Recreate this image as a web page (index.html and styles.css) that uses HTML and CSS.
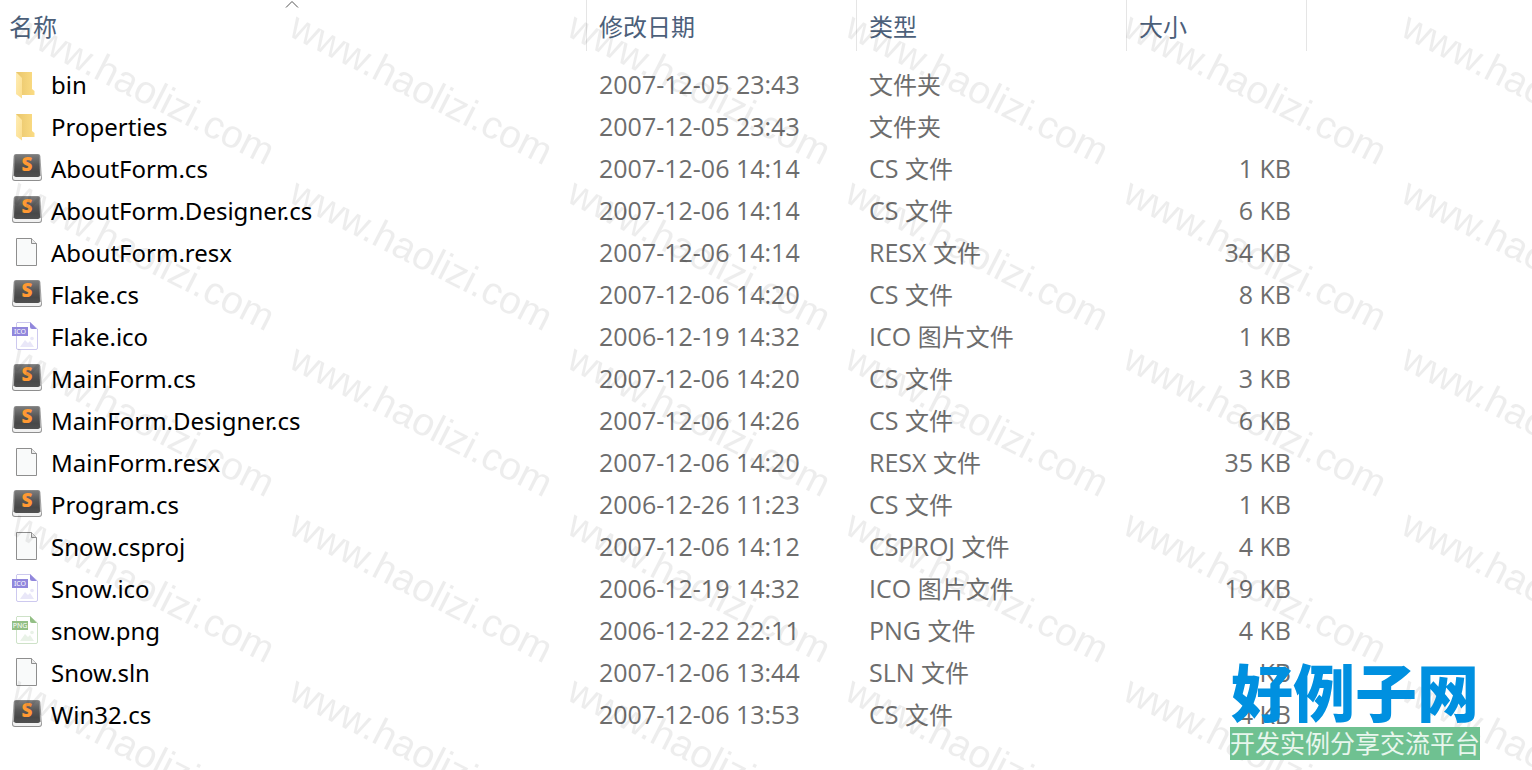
FILE: index.html
```html
<!DOCTYPE html>
<html lang="zh-CN">
<head>
    <meta charset="UTF-8">
    <meta name="viewport" content="width=device-width, initial-scale=1.0">
    <title>Snow</title>
    <link rel="stylesheet" href="styles.css">
</head>
<body>
    <!-- Icons shared by the rows -->
    <svg class="icon-defs" aria-hidden="true">
        <defs>
            <linearGradient id="key-face" x1="0" y1="0" x2="0" y2="1">
                <stop offset="0" stop-color="#7b7b7b"/>
                <stop offset="0.45" stop-color="#555"/>
                <stop offset="0.75" stop-color="#484848"/>
                <stop offset="1" stop-color="#505050"/>
            </linearGradient>
            <linearGradient id="key-side" x1="0" y1="0" x2="0" y2="1">
                <stop offset="0" stop-color="#888"/>
                <stop offset="0.7" stop-color="#b2b2b2"/>
                <stop offset="1" stop-color="#8c8c8c"/>
            </linearGradient>
            <linearGradient id="folder-front" x1="0" y1="0" x2="1" y2="1">
                <stop offset="0" stop-color="#ffedb5"/>
                <stop offset="1" stop-color="#fbdd8c"/>
            </linearGradient>
            <linearGradient id="folder-back" x1="0" y1="0" x2="1" y2="0">
                <stop offset="0" stop-color="#e9c66c"/>
                <stop offset="1" stop-color="#fbdc84"/>
            </linearGradient>
            <symbol id="icon-folder" viewBox="0 0 32 32">
                <path d="M5 3H21V20L23.500 22V26H10L5 25Z" fill="url(#folder-back)"/>
                <path d="M5 3L11 9V29.500L5 25Z" fill="url(#folder-front)"/>
            </symbol>
            <symbol id="icon-cs" viewBox="0 0 32 32">
                <path d="M5 1H27Q29 1 29.300 3L31 25Q31 28 28 28H4Q1 28 1 25L2.700 3Q3 1 5 1Z" fill="url(#key-side)"/>
                <path d="M2 23H30V25Q30 27 28 27H4Q2 27 2 25Z" fill="#f1f1f1"/>
                <path d="M5 2H27Q28 2 28.200 3L29 22Q29 24 27 24H5Q3 24 3 22L3.800 3Q4 2 5 2Z" fill="url(#key-face)"/>
                <text x="16" y="18" class="key-letter">S</text>
            </symbol>
            <symbol id="icon-file" viewBox="0 0 32 32">
                <path d="M5.500 1.500H20.500L25.500 6.500V28.500H5.500Z" fill="#f9fafa" stroke="#8e8e8e"/>
                <path d="M20.500 1.500V6.500H25.500" fill="#ececec" stroke="#8e8e8e"/>
            </symbol>
            <symbol id="icon-image" viewBox="0 0 32 32">
                <path d="M6 1.500H19L26.500 8V27Q26.500 28.500 25 28.500H7Q5.500 28.500 5.500 27V2Z" fill="#fff" stroke="currentColor" stroke-opacity="0.45"/>
                <path d="M19 1V6Q19 8 21 8H26Z" fill="currentColor"/>
                <path d="M9 26L14 19L17 22L19 20L23 26Z" fill="currentColor" fill-opacity="0.2"/>
                <circle cx="21" cy="17.500" r="1.800" fill="currentColor" fill-opacity="0.2"/>
                <path d="M1 6H17V15H1Z" fill="currentColor"/>
            </symbol>
        </defs>
    </svg>

    <main class="file-list">
        <table class="files">
            <colgroup>
                <col class="col-name">
                <col class="col-date">
                <col class="col-type">
                <col class="col-size">
                <col>
            </colgroup>
            <thead>
                <tr>
                    <th aria-sort="ascending">
                        <svg class="sort-arrow" viewBox="0 0 14 8" aria-hidden="true"><path d="M1 7.500L7 1.500L13 7.500"/></svg>
                        <button type="button">名称</button>
                    </th>
                    <th><button type="button">修改日期</button></th>
                    <th><button type="button">类型</button></th>
                    <th><button type="button">大小</button></th>
                    <th class="blank"></th>
                </tr>
            </thead>
            <tbody>
                <tr><td><div class="name"><svg><use href="#icon-folder"/></svg>bin</div></td><td>2007-12-05 23:43</td><td><span>文件夹</span></td><td></td></tr>
                <tr><td><div class="name"><svg><use href="#icon-folder"/></svg>Properties</div></td><td>2007-12-05 23:43</td><td><span>文件夹</span></td><td></td></tr>
                <tr><td><div class="name"><svg><use href="#icon-cs"/></svg>AboutForm.cs</div></td><td>2007-12-06 14:14</td><td>CS <span>文件</span></td><td>1 KB</td></tr>
                <tr><td><div class="name"><svg><use href="#icon-cs"/></svg>AboutForm.Designer.cs</div></td><td>2007-12-06 14:14</td><td>CS <span>文件</span></td><td>6 KB</td></tr>
                <tr><td><div class="name"><svg><use href="#icon-file"/></svg>AboutForm.resx</div></td><td>2007-12-06 14:14</td><td>RESX <span>文件</span></td><td>34 KB</td></tr>
                <tr><td><div class="name"><svg><use href="#icon-cs"/></svg>Flake.cs</div></td><td>2007-12-06 14:20</td><td>CS <span>文件</span></td><td>8 KB</td></tr>
                <tr><td><div class="name"><svg class="ico"><use href="#icon-image"/><text x="9" y="13">ICO</text></svg>Flake.ico</div></td><td>2006-12-19 14:32</td><td>ICO <span>图片文件</span></td><td>1 KB</td></tr>
                <tr><td><div class="name"><svg><use href="#icon-cs"/></svg>MainForm.cs</div></td><td>2007-12-06 14:20</td><td>CS <span>文件</span></td><td>3 KB</td></tr>
                <tr><td><div class="name"><svg><use href="#icon-cs"/></svg>MainForm.Designer.cs</div></td><td>2007-12-06 14:26</td><td>CS <span>文件</span></td><td>6 KB</td></tr>
                <tr><td><div class="name"><svg><use href="#icon-file"/></svg>MainForm.resx</div></td><td>2007-12-06 14:20</td><td>RESX <span>文件</span></td><td>35 KB</td></tr>
                <tr><td><div class="name"><svg><use href="#icon-cs"/></svg>Program.cs</div></td><td>2006-12-26 11:23</td><td>CS <span>文件</span></td><td>1 KB</td></tr>
                <tr><td><div class="name"><svg><use href="#icon-file"/></svg>Snow.csproj</div></td><td>2007-12-06 14:12</td><td>CSPROJ <span>文件</span></td><td>4 KB</td></tr>
                <tr><td><div class="name"><svg class="ico"><use href="#icon-image"/><text x="9" y="13">ICO</text></svg>Snow.ico</div></td><td>2006-12-19 14:32</td><td>ICO <span>图片文件</span></td><td>19 KB</td></tr>
                <tr><td><div class="name"><svg class="png"><use href="#icon-image"/><text x="9" y="13">PNG</text></svg>snow.png</div></td><td>2006-12-22 22:11</td><td>PNG <span>文件</span></td><td>4 KB</td></tr>
                <tr><td><div class="name"><svg><use href="#icon-file"/></svg>Snow.sln</div></td><td>2007-12-06 13:44</td><td>SLN <span>文件</span></td><td>1 KB</td></tr>
                <tr><td><div class="name"><svg><use href="#icon-cs"/></svg>Win32.cs</div></td><td>2007-12-06 13:53</td><td>CS <span>文件</span></td><td>4 KB</td></tr>
            </tbody>
        </table>
    </main>

    <!-- Repeating site watermark -->
    <svg class="watermark" aria-hidden="true">
        <defs>
            <pattern id="mark" width="278" height="166" patternUnits="userSpaceOnUse">
                <text transform="translate(9 35) rotate(27)">www.haolizi.com</text>
            </pattern>
        </defs>
        <rect width="100%" height="100%" fill="url(#mark)"/>
    </svg>

    <!-- Site stamp -->
    <div class="stamp">
        <div class="stamp-title">好例子网</div>
        <div class="stamp-text">开发实例分享交流平台</div>
    </div>
</body>
</html>
```
FILE: styles.css
```css
* {
    box-sizing: border-box;
}

body {
    margin: 0;
    min-height: 100vh;
    position: relative;
    overflow: hidden;
    background-color: #fff;
    font-family: "Open Sans", "Noto Sans CJK SC", sans-serif;
    font-size: 25px;
    color: #6d6d6d;
}

.icon-defs {
    position: absolute;
    width: 0;
    height: 0;
}

.files {
    width: 100%;
    table-layout: fixed;
    border-collapse: separate;
    border-spacing: 0;
}

.col-name {
    width: 587px;
}

.col-date, .col-type {
    width: 270px;
}

.col-size {
    width: 180px;
}

/* Header */
th {
    height: 51px;
    padding: 0;
    position: relative;
    border-right: 1px solid #e5e5e5;
    text-align: left;
}

th.blank {
    border-right: none;
}

th button {
    width: 100%;
    padding: 0 12px;
    border: none;
    background: none;
    font-family: "Noto Sans CJK SC", sans-serif;
    font-size: 24px;
    line-height: 50px;
    text-align: left;
    color: #4c607a;
}

th:first-child button {
    padding-left: 9px;
}

.sort-arrow {
    position: absolute;
    top: 0;
    left: 50%;
    width: 14px;
    height: 8px;
    margin-left: -8px;
    fill: none;
    stroke: #555;
}

/* Rows */
tbody::before {
    content: "";
    display: block;
    height: 13px;
}

td {
    height: 42px;
    padding: 0 12px 2px;
    line-height: 40px;
    white-space: nowrap;
}

td:first-child {
    padding-left: 11px;
    padding-bottom: 0;
    color: #000;
}

td:nth-child(4) {
    padding-right: 16px;
    text-align: right;
}

td span {
    font-size: 24px;
    line-height: 24px;
}

.name {
    display: flex;
    align-items: center;
    gap: 8px;
    height: 42px;
    font-family: "Noto Sans", sans-serif;
    font-size: 24px;
}

.name svg {
    width: 32px;
    height: 32px;
    flex: none;
}

.name text {
    fill: #fff;
    font-size: 7px;
    text-anchor: middle;
}

.key-letter {
    font-family: "Open Sans", sans-serif;
    font-size: 19px;
    font-weight: 800;
    fill: #ff9933;
    text-anchor: middle;
}

.name .ico {
    color: #9187dc;
}

.name .png {
    color: #93bf85;
}

/* Overlays */
.watermark {
    position: absolute;
    top: 0;
    left: 0;
    width: 100%;
    height: 100%;
    pointer-events: none;
}

.watermark text {
    font-family: "Liberation Sans", Arial, sans-serif;
    font-size: 39px;
    fill: #000;
    fill-opacity: 0.07;
}

.stamp {
    position: absolute;
    right: 52px;
    bottom: 10px;
    width: 250px;
    text-align: center;
    white-space: nowrap;
}

.stamp-title {
    font-family: "Noto Sans CJK SC", sans-serif;
    font-size: 62px;
    font-weight: 900;
    line-height: 74px;
    color: #0090e0;
}

.stamp-text {
    background-color: #6fc191;
    font-size: 25px;
    line-height: 33px;
    color: #e8f6ed;
}
```
